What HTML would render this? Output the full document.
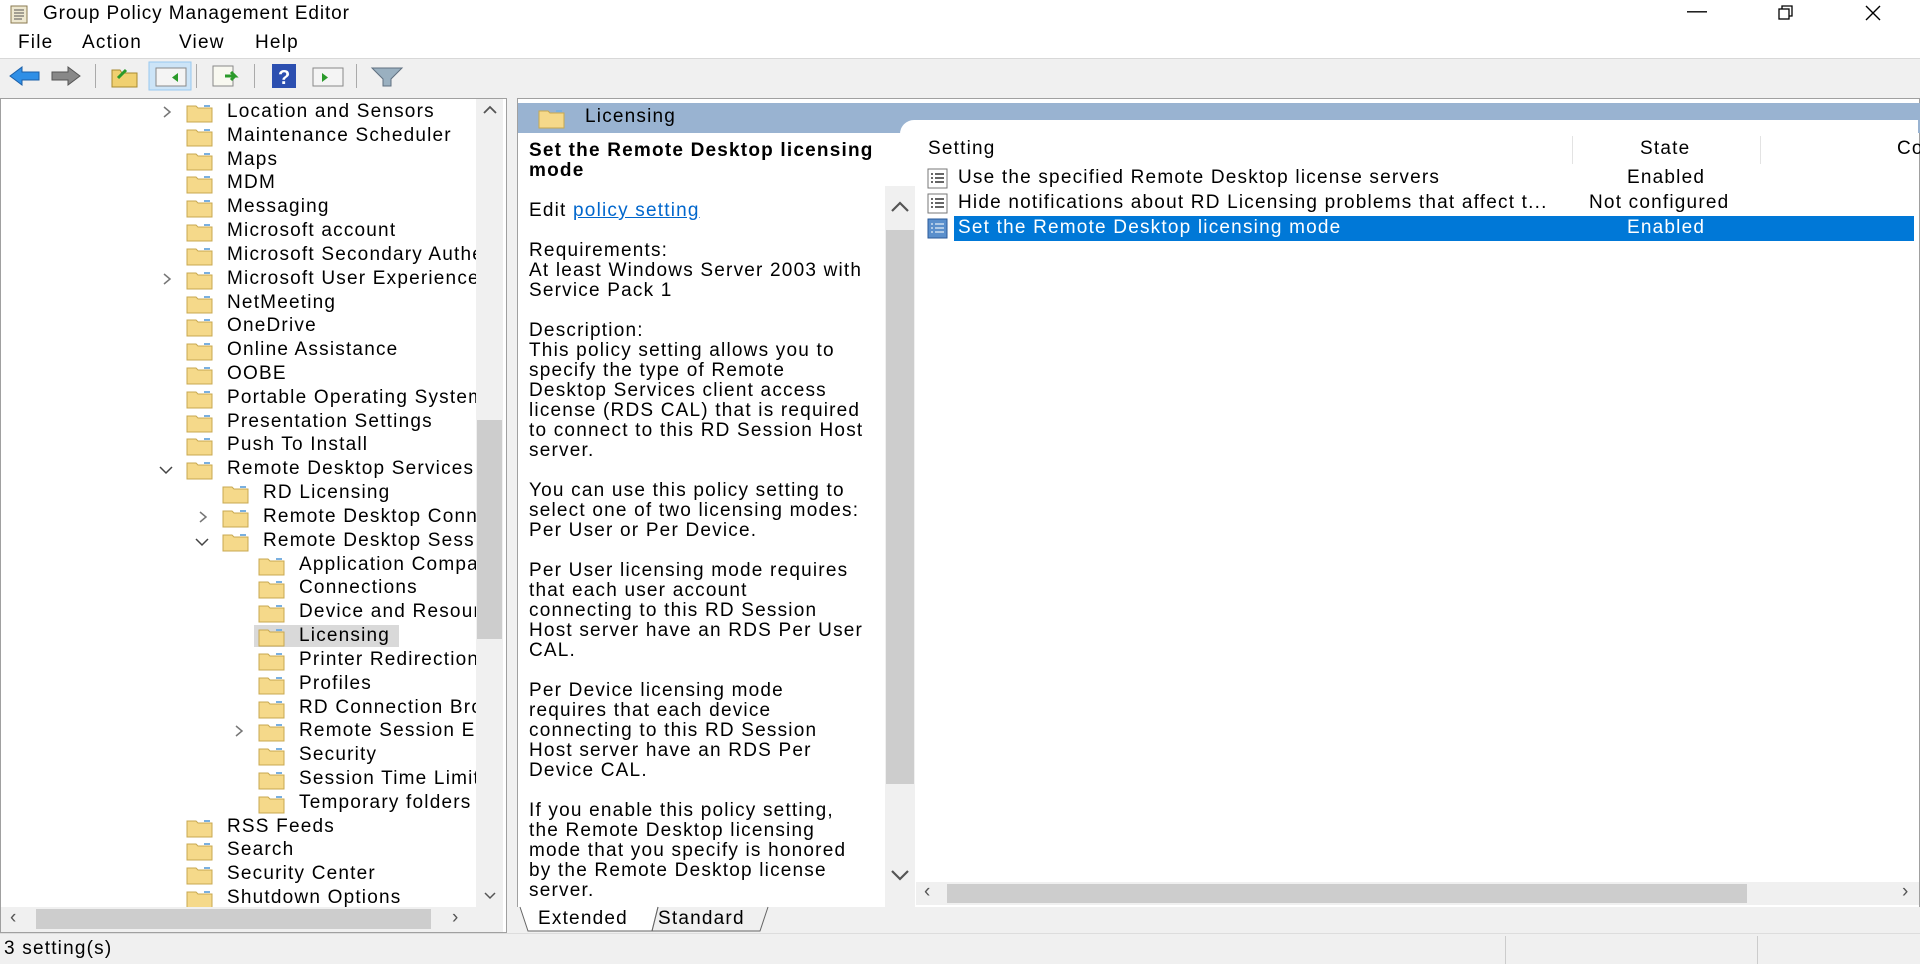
<!DOCTYPE html>
<html><head><meta charset="utf-8"><style>
*{margin:0;padding:0;box-sizing:border-box}
body{width:1920px;height:964px;background:#f0f0f0;font-family:"Liberation Sans",Arial,sans-serif;font-size:19px;letter-spacing:1.2px;color:#000;position:relative;overflow:hidden}
.a{position:absolute;white-space:nowrap}
.row{position:absolute;height:24px;line-height:24px;left:0;width:476px;overflow:hidden}
</style></head><body>
<!-- title -->
<div class="a" style="left:0;top:0;width:1920px;height:28px;background:#fff"></div>
<svg class="a" style="left:6px;top:4px" width="26" height="22"><rect x="5" y="2" width="16" height="17" fill="#eee8d0" stroke="#8a7a50"/><path d="M8 6h10M8 9h10M8 12h10M8 15h8" stroke="#555"/></svg>
<div class="a" style="left:43px;top:3px;letter-spacing:.9px">Group Policy Management Editor</div>
<div class="a" style="left:1687px;top:0;font-size:20px">&#8212;</div>
<svg class="a" style="left:1777px;top:4px" width="18" height="18"><rect x="2" y="5" width="10" height="10" fill="none" stroke="#000" stroke-width="1.3"/><path d="M5 5V2h10v10h-3" fill="none" stroke="#000" stroke-width="1.3"/></svg>
<svg class="a" style="left:1864px;top:4px" width="18" height="18"><path d="M2 2L16 16M16 2L2 16" stroke="#000" stroke-width="1.4"/></svg>
<!-- menu -->
<div class="a" style="left:0;top:28px;width:1920px;height:31px;background:#fff;border-bottom:1px solid #d8d8d8"></div>
<div class="a" style="left:18px;top:32px">File</div>
<div class="a" style="left:82px;top:32px">Action</div>
<div class="a" style="left:179px;top:32px">View</div>
<div class="a" style="left:255px;top:32px">Help</div>
<!-- toolbar -->
<svg class="a" style="left:0;top:60px" width="420" height="32">
<path d="M10 16l12-9v5h17v8H22v5z" fill="#2f8fe6" stroke="#1b5fa8"/>
<path d="M80 16l-12-9v5H52v8h16v5z" fill="#888" stroke="#555"/>
<rect x="95" y="4" width="1" height="24" fill="#aaa"/>
<path d="M112 10h8l2 3h15v14h-25z" fill="#f0d070" stroke="#a88a30"/><path d="M118 18l8-8" stroke="#2a9a2a" stroke-width="3"/>
<rect x="149" y="2" width="42" height="28" fill="#cce4f7" stroke="#99c9ef"/>
<rect x="156" y="8" width="30" height="18" fill="#f4f4f4" stroke="#888"/><path d="M178 13v9l-6-4.5z" fill="#2a9a2a"/>
<rect x="196" y="4" width="1" height="24" fill="#aaa"/>
<rect x="213" y="6" width="20" height="20" fill="#f8f8f0" stroke="#888"/><path d="M225 16h10l-4-4M235 16l-4 4" stroke="#2a9a2a" stroke-width="3" fill="none"/>
<rect x="254" y="4" width="1" height="24" fill="#aaa"/>
<rect x="272" y="4" width="24" height="24" fill="#2c4fb0"/><text x="278" y="24" fill="#fff" font-size="20" font-weight="bold" font-family="Liberation Sans">?</text>
<rect x="313" y="8" width="30" height="18" fill="#f4f4f4" stroke="#888"/><path d="M322 13v9l6-4.5z" fill="#2a9a2a"/>
<rect x="356" y="4" width="1" height="24" fill="#aaa"/>
<path d="M372 8h30l-11 11v7h-8v-7z" fill="#9ab0c0" stroke="#607080"/>
</svg>
<!-- left tree pane -->
<div class="a" style="left:0;top:98px;width:507px;height:835px;background:#fff;border:1px solid #a0a0a0"></div>
<div id="tree"></div>
<div class="a" style="left:476px;top:99px;width:27px;height:808px;background:#f0f0f0"></div>
<div class="a" style="left:477px;top:420px;width:25px;height:219px;background:#cdcdcd"></div>
<svg class="a" style="left:482px;top:104px" width="16" height="12"><path d="M2 9l6-6 6 6" fill="none" stroke="#555" stroke-width="1.8"/></svg>
<svg class="a" style="left:482px;top:890px" width="16" height="12"><path d="M3 3l5 5 5-5" fill="none" stroke="#555" stroke-width="1.5"/></svg>
<div class="a" style="left:1px;top:907px;width:502px;height:25px;background:#f0f0f0"></div>
<div class="a" style="left:36px;top:909px;width:395px;height:20px;background:#cdcdcd"></div>
<div class="a" style="left:10px;top:907px;color:#555">&lsaquo;</div>
<div class="a" style="left:452px;top:907px;color:#555">&rsaquo;</div>
<!-- right pane -->
<div class="a" style="left:517px;top:98px;width:1403px;height:811px;background:#fff;border:1px solid #a0a0a0"></div>
<div class="a" style="left:518px;top:103px;width:1402px;height:30px;background:#99b3d1"></div>
<div class="a" style="left:900px;top:120px;width:1018px;height:14px;background:#fff;border-radius:14px 0 0 0"></div>
<svg class="a" style="left:538px;top:107px" width="28" height="22"><path d="M1 4h9l2 2h14v15H1z" fill="#f5d98a" stroke="#c8a850"/><rect x="18" y="3" width="6" height="2" fill="#7ab0e0"/></svg>
<div class="a" style="left:585px;top:106px">Licensing</div>
<!-- description -->
<div class="a" style="left:529px;top:141px;line-height:20px;width:355px;height:760px;overflow:hidden"><b>Set the Remote Desktop licensing<br>mode</b><br><br>Edit <span style="color:#0066cc;text-decoration:underline">policy setting </span><br><br>Requirements:<br>At least Windows Server 2003 with<br>Service Pack 1<br><br>Description:<br>This policy setting allows you to<br>specify the type of Remote<br>Desktop Services client access<br>license (RDS CAL) that is required<br>to connect to this RD Session Host<br>server.<br><br>You can use this policy setting to<br>select one of two licensing modes:<br>Per User or Per Device.<br><br>Per User licensing mode requires<br>that each user account<br>connecting to this RD Session<br>Host server have an RDS Per User<br>CAL.<br><br>Per Device licensing mode<br>requires that each device<br>connecting to this RD Session<br>Host server have an RDS Per<br>Device CAL.<br><br>If you enable this policy setting,<br>the Remote Desktop licensing<br>mode that you specify is honored<br>by the Remote Desktop license<br>server.</div>
<div class="a" style="left:885px;top:186px;width:30px;height:723px;background:#f0f0f0"></div>
<div class="a" style="left:886px;top:230px;width:28px;height:554px;background:#cdcdcd"></div>
<svg class="a" style="left:890px;top:200px" width="20" height="14"><path d="M2 11l8-8 8 8" fill="none" stroke="#555" stroke-width="2.2"/></svg>
<svg class="a" style="left:890px;top:868px" width="20" height="14"><path d="M2 3l8 8 8-8" fill="none" stroke="#555" stroke-width="2.2"/></svg>
<div class="a" style="left:517px;top:907px;width:1403px;height:26px;background:#f0f0f0"></div>
<svg class="a" style="left:518px;top:906px" width="260" height="27"><path d="M2 1l8 24h124l6-24" fill="#fff" stroke="#666"/><path d="M134 25l6-24M134 25h108l8-24" fill="none" stroke="#666"/></svg>
<div class="a" style="left:538px;top:908px">Extended</div>
<div class="a" style="left:658px;top:908px">Standard</div>
<!-- list -->
<div class="a" style="left:928px;top:138px">Setting</div>
<div class="a" style="left:1572px;top:136px;width:1px;height:28px;background:#e3e3e3"></div>
<div class="a" style="left:1760px;top:136px;width:1px;height:28px;background:#e3e3e3"></div>
<div class="a" style="left:1640px;top:138px">State</div>
<div class="a" style="left:1897px;top:138px">Co</div>
<svg class="a" style="left:927px;top:168px" width="22" height="22"><rect x="1" y="1" width="19" height="19" fill="#fff" stroke="#777"/><path d="M4 6h2M4 10h2M4 14h2M8 6h9M8 10h9M8 14h9" stroke="#333" stroke-width="1.5"/></svg>
<svg class="a" style="left:927px;top:193px" width="22" height="22"><rect x="1" y="1" width="19" height="19" fill="#fff" stroke="#777"/><path d="M4 6h2M4 10h2M4 14h2M8 6h9M8 10h9M8 14h9" stroke="#333" stroke-width="1.5"/></svg>
<svg class="a" style="left:927px;top:218px" width="22" height="22"><rect x="1" y="1" width="19" height="19" fill="#5a8fcc" stroke="#2a5a9a"/><path d="M4 6h2M4 10h2M4 14h2M8 6h9M8 10h9M8 14h9" stroke="#cde" stroke-width="1.5"/></svg>
<div class="a" style="left:958px;top:167px">Use the specified Remote Desktop license servers</div>
<div class="a" style="left:1627px;top:167px">Enabled</div>
<div class="a" style="left:958px;top:192px">Hide notifications about RD Licensing problems that affect t...</div>
<div class="a" style="left:1589px;top:192px">Not configured</div>
<div class="a" style="left:954px;top:216px;width:960px;height:25px;background:#0078d7"></div>
<div class="a" style="left:958px;top:217px;color:#fff">Set the Remote Desktop licensing mode</div>
<div class="a" style="left:1627px;top:217px;color:#fff">Enabled</div>
<div class="a" style="left:916px;top:882px;width:1003px;height:23px;background:#f0f0f0"></div>
<div class="a" style="left:947px;top:884px;width:800px;height:19px;background:#cdcdcd"></div>
<div class="a" style="left:924px;top:881px;color:#555">&lsaquo;</div>
<div class="a" style="left:1902px;top:881px;color:#555">&rsaquo;</div>
<!-- status -->
<div class="a" style="left:0;top:933px;width:1920px;height:31px;background:#f0f0f0;border-top:1px solid #ddd"></div>
<div class="a" style="left:1505px;top:936px;width:1px;height:28px;background:#ccc"></div>
<div class="a" style="left:1757px;top:936px;width:1px;height:28px;background:#ccc"></div>
<div class="a" style="left:4px;top:938px">3 setting(s)</div>
<script>
var items=[[1,'>','Location and Sensors'],[1,'','Maintenance Scheduler'],[1,'','Maps'],[1,'','MDM'],[1,'','Messaging'],[1,'','Microsoft account'],[1,'','Microsoft Secondary Authentication Factor'],[1,'>','Microsoft User Experience Virtualization'],[1,'','NetMeeting'],[1,'','OneDrive'],[1,'','Online Assistance'],[1,'','OOBE'],[1,'','Portable Operating System'],[1,'','Presentation Settings'],[1,'','Push To Install'],[1,'v','Remote Desktop Services'],[2,'','RD Licensing'],[2,'>','Remote Desktop Connection Client'],[2,'v','Remote Desktop Session Host'],[3,'','Application Compatibility'],[3,'','Connections'],[3,'','Device and Resource Redirection'],[3,'','Licensing',1],[3,'','Printer Redirection'],[3,'','Profiles'],[3,'','RD Connection Broker'],[3,'>','Remote Session Environment'],[3,'','Security'],[3,'','Session Time Limits'],[3,'','Temporary folders'],[1,'','RSS Feeds'],[1,'','Search'],[1,'','Security Center'],[1,'','Shutdown Options']];
var h='';var tx={1:227,2:263,3:299};
items.forEach(function(it,i){var y=100+i*23.82;var t=tx[it[0]];
h+='<div class="row" style="top:'+y+'px">';
if(it[3])h+='<div class="a" style="left:'+(t-45)+'px;top:1px;width:145px;height:22px;background:#d9d9d9"></div>';
if(it[1]=='>')h+='<svg class="a" style="left:'+(t-66)+'px;top:6px" width="12" height="12"><path d="M3 1l6 5-6 5" fill="none" stroke="#777" stroke-width="1.5"/></svg>';
if(it[1]=='v')h+='<svg class="a" style="left:'+(t-68)+'px;top:7px" width="14" height="12"><path d="M1 3l6 6 6-6" fill="none" stroke="#444" stroke-width="1.5"/></svg>';
h+='<svg class="a" style="left:'+(t-41)+'px;top:2px" width="28" height="21"><path d="M1 4h9l2 2h14v14H1z" fill="#f5d98a" stroke="#c8a850"/><rect x="18" y="3" width="6" height="2" fill="#7ab0e0"/></svg>';
h+='<div class="a" style="left:'+t+'px;top:0">'+it[2]+'</div></div>';});
document.getElementById('tree').innerHTML=h;
</script>
</body></html>
